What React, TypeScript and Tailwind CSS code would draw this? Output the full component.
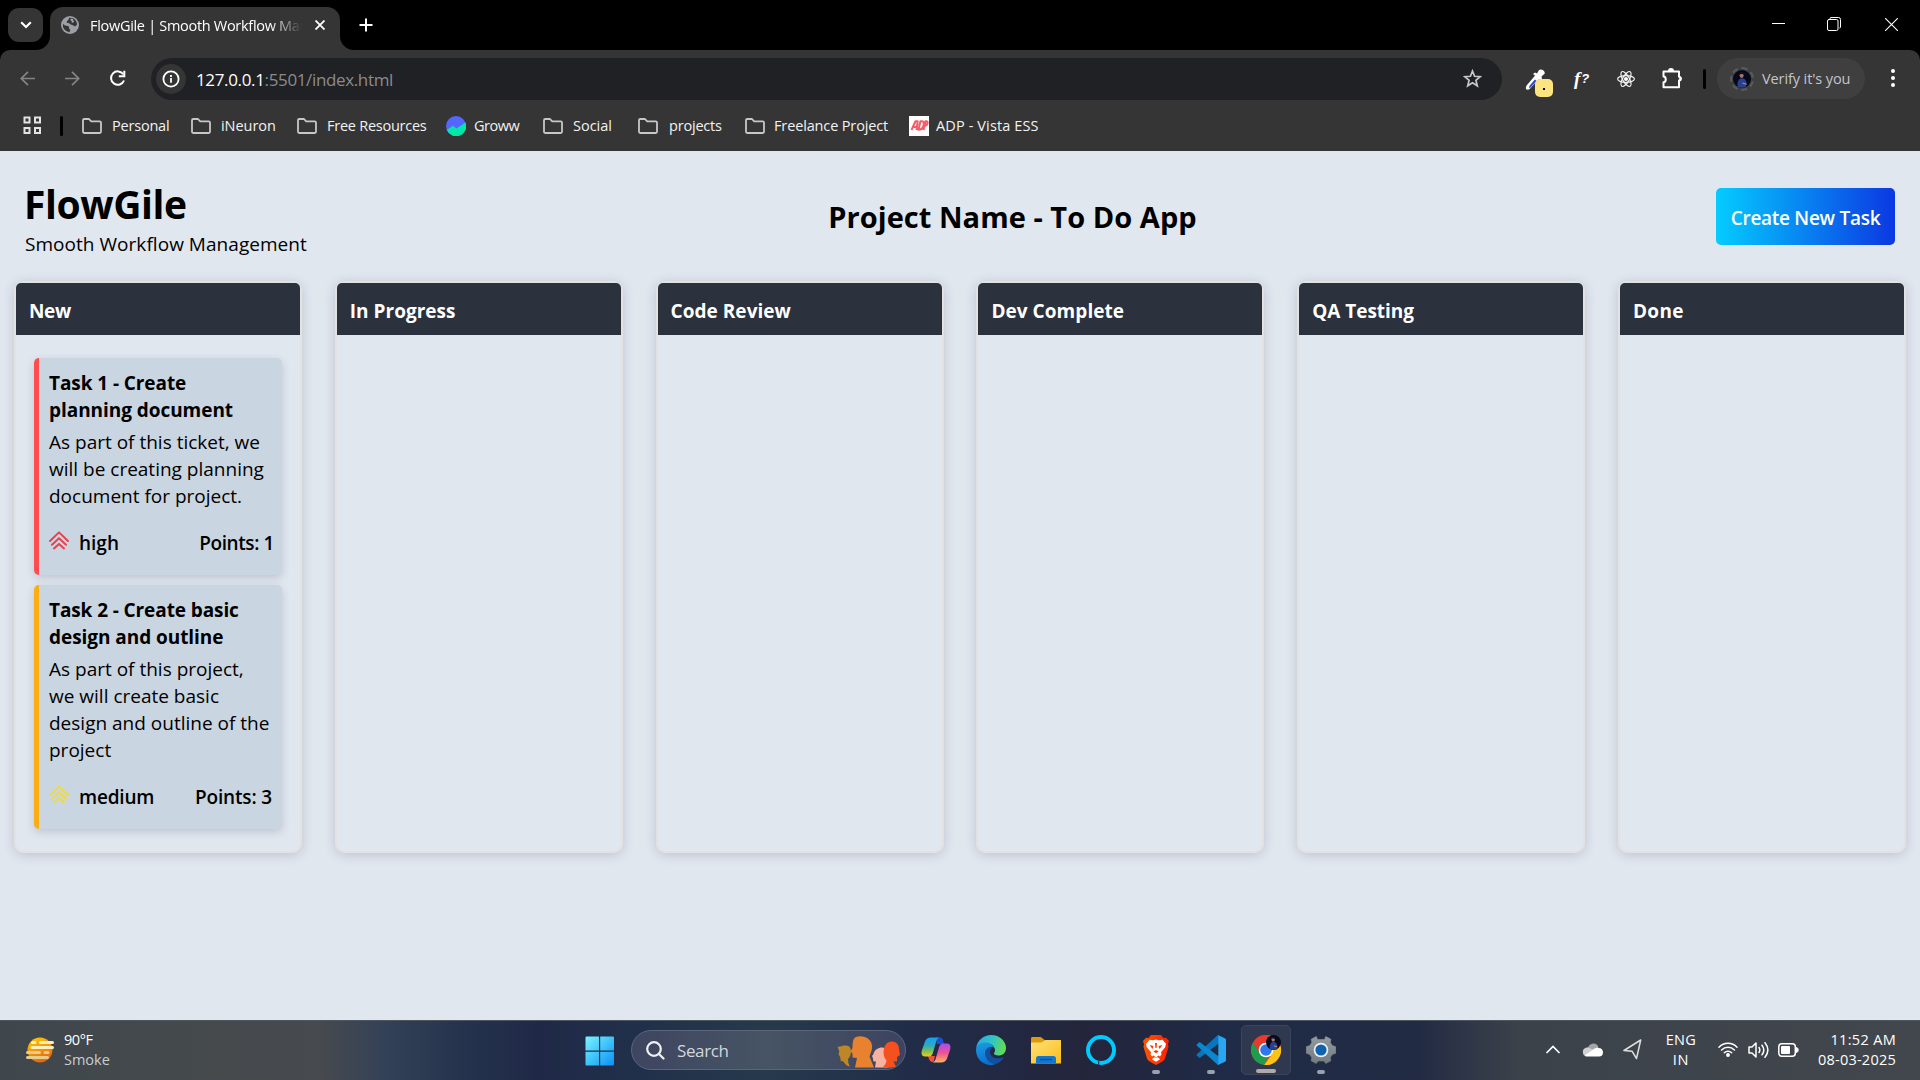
import React from 'react';

type Task = {
  title: React.ReactNode;
  body: React.ReactNode;
  level: 'high' | 'medium';
  points: number;
};

const tasks: Task[] = [
  {
    title: (
      <>
        <span className="tracking-[-0.08px]">Task 1 - Create</span>
        <br />
        planning document
      </>
    ),
    body: (
      <>
        As part of this ticket, we
        <br />
        will be creating planning
        <br />
        document for project.
      </>
    ),
    level: 'high',
    points: 1,
  },
  {
    title: (
      <>
        <span className="tracking-[-0.1px]">Task 2 - Create basic</span>
        <br />
        design and outline
      </>
    ),
    body: (
      <>
        As part of this project,
        <br />
        we will create basic
        <br />
        design and outline of the
        <br />
        project
      </>
    ),
    level: 'medium',
    points: 3,
  },
];

function Priority({ level }: { level: Task['level'] }) {
  return (
    <svg
      width="20"
      height="19"
      viewBox="0 0 20 19"
      fill="none"
      strokeWidth="2"
      strokeLinecap="round"
      strokeLinejoin="round"
      className={level === 'high' ? 'stroke-[#ea414c]' : 'stroke-[#ecdb45]'}
    >
      <path d="M1 10 10 1.400l9 8.600M3 13.800l7-6.500 7 6.500M5 17.400l5-4.500 5 4.500" />
    </svg>
  );
}

function TaskCard({ task }: { task: Task }) {
  const high = task.level === 'high';
  return (
    <article
      className={
        'rounded-[5px] border-l-[5px] bg-[#c9d5e1] px-[10px] pt-3 pb-[18px] text-[19px] leading-[27px] shadow-[0_3px_9px_rgba(60,55,90,0.2)] ' +
        (high ? 'border-[#ff4d4f]' : 'border-[#faad14]')
      }
    >
      <h3 className="font-bold tracking-[-0.05px] whitespace-nowrap">{task.title}</h3>
      <p className="mt-[5px] whitespace-nowrap">{task.body}</p>
      <div className="mt-5 flex justify-between font-semibold">
        <span className="flex gap-[10px]">
          <span className="pt-[1px]">
            <Priority level={task.level} />
          </span>
          <span className={high ? '' : 'tracking-[-0.2px]'}>{task.level}</span>
        </span>
        <span className={high ? 'mr-[-2px] tracking-[-0.4px]' : 'tracking-[-0.15px]'}>Points: {task.points}</span>
      </div>
    </article>
  );
}

const columns = [
  { name: 'New', cls: 'tracking-[-0.34px]' },
  { name: 'In Progress', cls: 'tracking-[0.02px]' },
  { name: 'Code Review', cls: 'tracking-[0.03px]' },
  { name: 'Dev Complete', cls: 'tracking-[0.05px]' },
  { name: 'QA Testing', cls: 'tracking-[-0.04px]' },
  { name: 'Done', cls: 'tracking-[0.3px]' },
];

function Board() {
  return (
    <main className="h-[869px] bg-[#e1e7ef] text-black">
      <header className="flex h-[130px] justify-between pr-[25px] pl-[24px]">
        <div className="w-[300px] pt-[29px] whitespace-nowrap">
          <h1 className="text-[39px] leading-[48px] font-bold tracking-[-0.4px]">FlowGile</h1>
          <p className="mt-[3px] pl-[1px] text-[19px] leading-[27px] tracking-[0.04px]">
            Smooth Workflow Management
          </p>
        </div>
        <h2 className="ml-[106px] pt-[46px] text-[29px] leading-[40px] font-bold tracking-[0.04px]">
          Project Name - To Do App
        </h2>
        <div className="flex w-[300px] justify-end pt-[37px]">
          <button className="h-[57px] w-[179px] rounded-[5px] bg-[linear-gradient(90deg,#05ccff,#0b38e2)] pt-[4px] text-[19px] font-semibold tracking-[-0.28px] text-white">
            Create New Task
          </button>
        </div>
      </header>
      <div className="flex h-[572px] justify-between px-[14px]">
        {columns.map((c, i) => (
          <section
            key={c.name}
            className="w-[288px] rounded-[10px] border-2 border-[#e2e2e3] shadow-[0_2px_12px_rgba(55,45,90,0.2)]"
          >
            <h2
              className={
                'h-[52px] rounded-t-[5px] bg-[#2b313d] pt-[15px] pl-[13px] text-[19px] leading-[27px] font-bold text-white ' +
                c.cls
              }
            >
              {c.name}
            </h2>
            {i === 0 && (
              <div className="flex flex-col gap-[10px] px-[18px] py-[23px]">
                {tasks.map((t) => (
                  <TaskCard key={t.level} task={t} />
                ))}
              </div>
            )}
          </section>
        ))}
      </div>
    </main>
  );
}

function TabStrip() {
  return (
    <div className="flex h-[50px] items-start bg-black text-white">
      <button className="mt-2 ml-2 flex h-[34px] w-[35px] items-center justify-center rounded-[11px] bg-[#353535]">
        <svg width="12" height="8" viewBox="0 0 12 8" fill="none" stroke="#fff" strokeWidth="2.2">
          <path d="M1.2 1.2 6 6l4.8-4.8" />
        </svg>
      </button>
      <svg width="14" height="14" className="mt-9 ml-[-7px]" fill="#353535">
        <path d="M14 0v14H0A14 14 0 0 0 14 0z" />
      </svg>
      <div className="mt-[7px] flex h-[43px] w-[290px] items-center rounded-t-[13px] bg-[#353535] pr-[14px] pb-[7px] pl-[11px]">
        <svg width="18" height="18" viewBox="0 0 18 18">
          <circle cx="9" cy="9" r="9" fill="#9aa0a6" />
          <path
            d="M2 7.500c1 2.200 3 2 5 2.600 2 .6.3 2.600 1.800 3.200.9.400 0 2.600-.4 3A7.300 7.300 0 0 1 2 7.500zM8.500 1.800c-1 1-.6 2.200-2 3-1.400.8-1 2.400.6 2.200 1.600-.2 1.800 1.600 3.500 1.700 1.800 0 2 2 3.600 1.500L16 8.800C16.300 5 13 1.400 8.500 1.800z"
            fill="#353535"
          />
          <path d="M10.500 2.500c2.500.5 1.500 2.500 3 3.200l-2.500 1.300c-1-.6.5-1.500-.8-2.200s-1.200-1.600.3-2.300z" fill="#9aa0a6" />
        </svg>
        <div className="ml-[10px] w-[213px] overflow-hidden mask-r-from-85% pt-[1px] pl-[1px] text-[14.500px] leading-5 tracking-[-0.3px] whitespace-nowrap">
          FlowGile | Smooth Workflow Management
        </div>
        <svg width="10" height="10" viewBox="0 0 10 10" stroke="#fff" strokeWidth="1.800" className="ml-[13px] shrink-0">
          <path d="m.5.5 9 9m0-9-9 9" />
        </svg>
      </div>
      <svg width="14" height="14" className="mt-9" fill="#353535">
        <path d="M0 0v14h14A14 14 0 0 1 0 0z" />
      </svg>
      <svg width="14" height="14" viewBox="0 0 14 14" stroke="#fff" strokeWidth="2" className="mt-[18px] ml-[5px]">
        <path d="M7 .5v13M.5 7h13" />
      </svg>
      <div className="mt-[17px] mr-[22px] ml-auto flex items-center gap-[43px]">
        <svg width="13" height="13" stroke="#fff" className="mr-[-1px]">
          <path d="M0 5.500h13" />
        </svg>
        <svg width="14" height="14" viewBox="0 0 14 14" fill="none" stroke="#fff" className="mr-[1px]">
          <path d="M3 2.500V1.700C3 1 3.300.5 4 .5h7.500a2 2 0 0 1 2 2V10c0 .6-.4 1-1 1" />
          <rect x=".5" y="2.500" width="10.500" height="11" rx="1.500" />
        </svg>
        <svg width="13" height="13" viewBox="0 0 13 13" stroke="#fff" strokeWidth="1.100">
          <path d="m0 0 13 13M13 0 0 13" />
        </svg>
      </div>
    </div>
  );
}

function Arrow({ flip }: { flip?: boolean }) {
  return (
    <svg
      width="15"
      height="15"
      viewBox="0 0 15 15"
      fill="none"
      stroke="#858585"
      strokeWidth="1.700"
      className={flip ? 'rotate-180' : ''}
    >
      <path d="M15 7.500H1.500M8 .8 1.300 7.500 8 14.200" />
    </svg>
  );
}

function Avatar({ size }: { size: number }) {
  return (
    <svg width={size} height={size} viewBox="0 0 18 18" className="shrink-0">
      <circle cx="9" cy="9" r="9" fill="#07091a" />
      <path d="M4.500 16.500C4 11 6 8.500 9 8.200c3 0 4.500 3 4.700 5.800l-1 3A9 9 0 0 1 4.500 16.500z" fill="#27408f" />
      <ellipse cx="8.600" cy="5.300" rx="2" ry="2.600" fill="#a5766b" />
      <path d="M6.500 4.600C6.500 1.800 10.800 1.800 10.700 4.800 9.500 3.900 8 3.900 6.500 4.600z" fill="#15121c" />
      <path d="m9.500 13 4 1.200" stroke="#c08d7f" strokeWidth="1.200" />
    </svg>
  );
}

function Toolbar() {
  return (
    <div className="flex h-[57px] items-center rounded-t-[10px] bg-[#353535] pl-5">
      <Arrow />
      <div className="ml-[30px] flex">
        <Arrow flip />
      </div>
      <svg width="17" height="17" viewBox="0 0 17 17" fill="none" stroke="#fff" strokeWidth="2" className="ml-[29px]">
        <path d="M14.300 4.300A6.700 6.700 0 1 0 15 10.500" />
        <path d="M15.300.8v5.400H9.800" />
      </svg>
      <div className="ml-[25px] flex h-[42px] w-[1351px] items-center rounded-full bg-[#202124] pr-5 pl-[5px]">
        <span className="flex size-[30px] items-center justify-center rounded-full bg-[#353535]">
          <svg width="18" height="18" viewBox="0 0 18 18" fill="none" stroke="#fff" strokeWidth="1.800">
            <circle cx="9" cy="9" r="7.600" />
            <path d="M9 8v4.800M9 5v1.900" />
          </svg>
        </span>
        <span className="ml-[10px] pt-0.5 text-[17px] leading-6 whitespace-nowrap text-[#8b8b8c]">
          <span className="tracking-[-0.35px] text-white">127.0.0.1</span>
          <span className="tracking-[-0.36px]">:5501/index.html</span>
        </span>
        <svg width="19" height="19" viewBox="0 0 19 19" fill="none" stroke="#c7c7c7" strokeWidth="1.700" className="ml-auto">
          <path d="m9.500 2 2.100 5.300 5.600.4-4.300 3.600 1.400 5.500-4.800-3-4.800 3 1.400-5.500-4.300-3.600 5.600-.4z" />
        </svg>
      </div>
      <div className="relative ml-[23px] size-5">
        <svg width="20" height="22" viewBox="0 0 20 22">
          <path d="m11 5.500-9 10.500c-1.500 2-1.700 4.500.6 4.700 1.500 0 2.200-.8 3.200-2L15 9z" fill="#fff" />
          <path d="m9.800 10.500-5 6c-1 1.600-.8 2.800.2 2.600L12 12z" fill="#2c4fd0" />
          <path d="m8 5 2-1.500 2 1 2-3.500c2-1.500 6 0 5.800 3.500l-3.300 3 .5 2-1.500 1.500z" fill="#fff" />
        </svg>
        <span className="absolute top-[10px] left-[10px] flex size-[18px] items-center justify-center rounded-[5px] bg-[#fde47f]">
          <span className="size-[2px] translate-y-[1px] bg-black" />
        </span>
      </div>
      <span className="ml-[29px] flex w-[18px] items-center leading-5 whitespace-nowrap text-white italic">
        <span className="font-['Liberation_Serif'] text-[19px] font-semibold">f</span>
        <span className="pl-[1px] font-['Liberation_Sans'] text-[13px] font-bold">?</span>
      </span>
      <svg width="18" height="18" viewBox="0 0 18 18" fill="none" stroke="#f1f1f1" strokeWidth="1.200" className="ml-[25px]">
        <ellipse cx="9" cy="9" rx="8.400" ry="3.300" />
        <ellipse cx="9" cy="9" rx="8.400" ry="3.300" transform="rotate(60 9 9)" />
        <ellipse cx="9" cy="9" rx="8.400" ry="3.300" transform="rotate(120 9 9)" />
        <circle cx="9" cy="9" r="1.500" fill="#fff" />
      </svg>
      <svg width="21" height="21" viewBox="0 0 21 21" fill="none" stroke="#fff" strokeWidth="2" className="mb-[1px] ml-[27px]">
        <path
          d="M1.500 3.500H17v5.300c2.200.2 2.200 3.500 0 3.700v6.700H1.500v-5c3-.3 3-5.300 0-5.600z"
          strokeLinejoin="round"
        />
        <path d="M7 3a2 2 0 0 1 4 0M17.500 9a1.800 1.800 0 0 1 0 3.500" fill="#fff" />
      </svg>
      <span className="ml-[20px] h-5 w-[3px] rounded bg-black" />
      <div className="ml-[11px] flex h-[41px] w-[148px] items-center rounded-full bg-[#3f3f3f] pl-[13px]">
        <span className="flex size-6 items-center justify-center rounded-full border-2 border-dashed border-[#5a5a5a]">
          <Avatar size={18} />
        </span>
        <span className="ml-[8px] text-[14.500px] tracking-[-0.1px] whitespace-nowrap text-[#c3c5c9]">Verify it's you</span>
      </div>
      <div className="mb-[1px] ml-[26px] flex flex-col gap-[3px]">
        <span className="size-1 rounded-full bg-white" />
        <span className="size-1 rounded-full bg-white" />
        <span className="size-1 rounded-full bg-white" />
      </div>
    </div>
  );
}

function Folder() {
  return (
    <svg width="20" height="16" viewBox="0 0 20 16" fill="none" stroke="#c7c7c7" strokeWidth="1.800" strokeLinejoin="round">
      <path d="M1 2.200C1 1.500 1.500 1 2.200 1H7l2.200 2.400h8.500c.8 0 1.300.5 1.300 1.200v9.200c0 .7-.5 1.200-1.200 1.200H2.200C1.500 15 1 14.500 1 13.800z" />
    </svg>
  );
}

function Groww() {
  return (
    <svg width="20" height="20" viewBox="0 0 20 20">
      <circle cx="10" cy="10" r="10" fill="#5367ff" />
      <path d="M.8 14 7 9.700l3.500 2.700L19.500 6.500A10 10 0 0 1 .8 14z" fill="#00e8a9" />
    </svg>
  );
}

function Adp() {
  return (
    <span className="flex size-5 items-center justify-center bg-white">
      <svg width="19" height="11" viewBox="0 0 18 11" fill="none" stroke="#f0606b" strokeWidth="2.100" strokeLinejoin="round">
        <path d="M1 10 5 1.200h2.200L6 10M3 7h3M8 9.700 10 1.200h1.500c2.200 0 2 3 1.200 5.400C12 9 11 9.700 8 9.700zM13 10l2-8.800h1.200c1.600.6 1 4.300-1.800 4.800" />
      </svg>
    </span>
  );
}

const bookmarks = [
  { label: 'Personal', icon: <Folder />, cls: 'w-[109px] gap-[10px] tracking-[-0.2px]' },
  { label: 'iNeuron', icon: <Folder />, cls: 'w-[106px] gap-[10px] tracking-[-0.04px]' },
  { label: 'Free Resources', icon: <Folder />, cls: 'w-[149px] gap-[10px] tracking-[-0.25px]' },
  { label: 'Groww', icon: <Groww />, cls: 'w-[97px] gap-[8px] tracking-[-0.48px]' },
  { label: 'Social', icon: <Folder />, cls: 'w-[95px] gap-[10px]' },
  { label: 'projects', icon: <Folder />, cls: 'w-[107px] gap-[11px] tracking-[-0.2px]' },
  { label: 'Freelance Project', icon: <Folder />, cls: 'w-[164px] gap-[9px] tracking-[-0.14px]' },
  { label: 'ADP - Vista ESS', icon: <Adp />, cls: 'gap-[7px] tracking-[0.12px]' },
];

function Bookmarks() {
  return (
    <div className="flex h-11 items-center bg-[#353535] pb-[7px] pl-[23px] text-[14.500px] leading-5 text-[#f2f2f2]">
      <svg width="19" height="19" viewBox="0 0 19 19" fill="none" stroke="#e3e3e3" strokeWidth="2">
        <path d="M1.500 1.500h5v5h-5zM12 1.500h5v5h-5zM1.500 12h5v5h-5zM12 12h5v5h-5z" />
      </svg>
      <span className="ml-[18px] h-5 w-[3px] rounded bg-black" />
      <div className="ml-[19px] flex">
        {bookmarks.map((b) => (
          <span key={b.label} className={'flex shrink-0 items-center whitespace-nowrap ' + b.cls}>
            {b.icon}
            {b.label}
          </span>
        ))}
      </div>
    </div>
  );
}

function WindowsLogo() {
  return (
    <svg width="30" height="30" viewBox="0 0 30 30">
      <defs>
        <linearGradient id="win" x1="0" y1="0" x2="1" y2="1">
          <stop offset="0" stopColor="#7df3ff" />
          <stop offset=".5" stopColor="#3fc4fb" />
          <stop offset="1" stopColor="#0c8ff6" />
        </linearGradient>
      </defs>
      <path
        d="M1.800.500H14v14H.5V1.800C.5 1 1 .5 1.800.5zM15.200.500h12.500c.9 0 1.300.5 1.300 1.300v12.700H15.200zM.5 15.700H14v13.800H1.800c-.8 0-1.300-.5-1.300-1.300zM15.200 15.700H29v12.500c0 .8-.4 1.300-1.300 1.300H15.200z"
        fill="url(#win)"
      />
    </svg>
  );
}

function People() {
  return (
    <svg width="64" height="32" viewBox="0 0 64 32">
      <path
        d="M.5 10.500C3 11.500 5 9 8 9.500c3 0 6 .5 6 6 0 4-2 6.500-3 7.500l.5 4.500 1.500 3c-3-.5-5-2-6.500-5l-2.700-.500-.5-3.500L1.500 18l.8-2.500z"
        fill="#bd8728"
      />
      <path
        d="M18 1.500C25-2 36 2 35 12c-.3 4-2 6-2.500 8.500L37 31.500H18l2-9.500-4.500-.5v-4l-2-2 2-3.500c-.2-5 .5-8.500 2.500-10.500z"
        fill="#e8822e"
      />
      <path d="M40 13c3-2.500 9-2 11 1v17.500H38l1-6h-2.500l-.8-4-.7-1.500 1.500-2c.3-2 1.500-4 3.500-5z" fill="#f6b3a3" />
      <path d="M50 7c5-3.500 12-1 12 6l1 6-3 2v4.500h-3.500l2.500 5c-4 1.500-10 1.500-13 0 2-1 3-3 3.500-6-4-4-4-13 .5-17.500z" fill="#f4511e" />
    </svg>
  );
}

function Copilot() {
  return (
    <svg width="30" height="26" viewBox="0 0 30 26">
      <defs>
        <linearGradient id="cpA" x1="0" y1="0" x2="0" y2="1">
          <stop offset="0" stopColor="#14a4e9" />
          <stop offset=".4" stopColor="#2aa8c8" />
          <stop offset=".7" stopColor="#78bf5a" />
          <stop offset="1" stopColor="#f5cd10" />
        </linearGradient>
        <linearGradient id="cpB" x1="0" y1="0" x2="0" y2="1">
          <stop offset="0" stopColor="#a64cf0" />
          <stop offset=".5" stopColor="#ef5393" />
          <stop offset="1" stopColor="#ffb25e" />
        </linearGradient>
      </defs>
      <path d="M15 .5h4c2 0 2.700 1.500 3.200 3.200L23 7h-7z" fill="#1b4fd8" />
      <path d="M7 19h7l-1.500 6h-1.200C9 25 8 22.500 7 19z" fill="#f0503c" />
      <path d="M10 .5h8c-2 1-2.500 3-3.200 5.500L12 15.500C11 19 9.500 19.500 7 19.500H4C.5 19.500 0 16.500 1 13L4 4.500C5 2 7 .5 10 .5z" fill="url(#cpA)" />
      <path d="M20 25.500h-8c2-1 2.500-3 3.200-5.500L18 10.500C19 7 20.500 6.500 23 6.500h3c3.500 0 4 3 3 6.500l-3 8.500c-1 2.500-3 4-6 4z" fill="url(#cpB)" />
    </svg>
  );
}

function Edge() {
  return (
    <svg width="30" height="30" viewBox="0 0 30 30">
      <defs>
        <linearGradient id="edA" x1="0" y1=".3" x2="1" y2=".5">
          <stop offset="0" stopColor="#2fa9e0" />
          <stop offset=".5" stopColor="#2fc3c8" />
          <stop offset="1" stopColor="#66dd4e" />
        </linearGradient>
        <linearGradient id="edB" x1="0" y1="0" x2=".3" y2="1">
          <stop offset="0" stopColor="#1b9de2" />
          <stop offset="1" stopColor="#0b6fd0" />
        </linearGradient>
      </defs>
      <path d="M0 14C1 5 8 0 15 0c9 0 15 6.500 15 13 0 5-3.500 7.500-7.500 7.500-3 0-5-1-4.500-2.500 3-3-.5-10-8.500-10C5 8 1.500 10 0 14z" fill="url(#edA)" />
      <path d="M0 14.500C.5 10 5 7.500 9.500 7.500c4 0 7.500 2.500 8 5-6-2-8.500 4-6.500 8.500 2 5 6.500 7.500 9 7.800-1.500.8-3.500 1.200-5 1.200C6.500 30 0 23.500 0 15z" fill="url(#edB)" />
      <path d="M12.500 12.800c-4 1.700-4.200 6.500-2 10.500 2 4 5.500 6 9.500 5.600 3.500-1.200 6.500-3.800 8-7.200-4 2.300-9.500 2.300-12.500-1-2.300-2.500-1.800-5.500.5-8z" fill="#12509f" />
    </svg>
  );
}

function Explorer() {
  return (
    <svg width="30" height="27" viewBox="0 0 30 27">
      <defs>
        <linearGradient id="fx" x1="0" y1="0" x2="1" y2="1">
          <stop offset="0" stopColor="#ffe17a" />
          <stop offset="1" stopColor="#fbbd19" />
        </linearGradient>
      </defs>
      <path d="M0 1.500C0 .6.600 0 1.500 0H9c1.500 0 2 1 3 1.800L14 3.200h16V9H0z" fill="#dd9b0c" />
      <path d="M0 5.500h10c2 0 3-2.500 5-2.500h14c.6 0 1 .4 1 1v22.500H0z" fill="url(#fx)" />
      <path d="M5 26.500v-5C5 20 6 19 7.500 19h15c1.500 0 2.500 1 2.500 2.500v5z" fill="#1377cf" />
      <path d="M9.500 22.500h11" stroke="#0b4f95" strokeWidth="1.300" strokeLinecap="round" />
    </svg>
  );
}

function Alexa() {
  return (
    <svg width="30" height="30" viewBox="0 0 30 30" fill="none">
      <circle cx="15" cy="15" r="13" stroke="#00caff" strokeWidth="4" />
      <path d="M12.700 26v3.900" stroke="#22253a" strokeWidth="1" />
    </svg>
  );
}

function Brave() {
  return (
    <svg width="26" height="30" viewBox="0 0 26 30">
      <defs>
        <linearGradient id="br" x1="0" x2="1">
          <stop offset="0" stopColor="#ff5500" />
          <stop offset="1" stopColor="#ff2000" />
        </linearGradient>
      </defs>
      <path d="M8 0h10l2.500 3 2.500-.3L26 6l-1 3 .5 3-3.500 11.500c-.5 1.500-2 2.500-3.500 3.500L13 30l-5.500-3C6 26 4.500 25 4 23.500L.5 12 1 9 0 6l3-3.300 2.500.3z" fill="url(#br)" />
      <path
        d="m6.500 4.800 3.500.5 3-.7 3 .7 3.500-.5 3.500 4-.8 3.500-4.200 5 .5 2-1.500 2.200-1.800-1L13 23l-2.200-2.500-1.800 1L7.500 19.300l.5-2-4.200-5L3 8.800z"
        fill="#fff"
      />
      <path d="m6.500 10 4 1-1 3zM19.500 10l-4 1 1 3zM10.300 16.500 13 15l2.700 1.500L13 18.300zM12 8h2l-.4 5h-1.200z" fill="#ff3a00" />
      <path d="m8.800 24.200 2.400-2 1.800.8 1.800-.8 2.400 2L13 26.800z" fill="#fff" />
    </svg>
  );
}

function VsCode() {
  return (
    <svg width="30" height="30" viewBox="0 0 30 30">
      <path d="M22.200.2 29 3.200c.6.300 1 .9 1 1.600L22 9 4.300 22.600c-.4.300-.9.300-1.300 0L.9 20.700a1 1 0 0 1 0-1.400L21 .8z" fill="#0876bd" />
      <path d="M22.200 29.800 29 26.800c.6-.3 1-.9 1-1.600L22 21 4.300 7.400c-.4-.3-.9-.3-1.300 0L.9 9.300a1 1 0 0 0 0 1.400L21 29.200z" fill="#0a87cf" />
      <path d="M22.200 29.800c-.6.200-1.200 0-1.500-.4.800.7 1.600.3 1.600-.8V1.400c0-1.100-.8-1.500-1.600-.8.300-.4.900-.6 1.500-.4L29 3.400c.6.300 1 .9 1 1.600v20c0 .7-.4 1.300-1 1.600z" fill="#2aa5ef" />
    </svg>
  );
}

function Chrome() {
  return (
    <div className="relative">
      <svg width="30" height="30" viewBox="0 0 30 30">
        <circle cx="15" cy="15" r="15" fill="#e33b2e" />
        <path d="M2 7.500 8.900 18.500 17 22l-3.800 7.900A15 15 0 0 1 2 7.500z" fill="#1f9d4d" />
        <path d="M15 8h13.300A15 15 0 0 1 13.200 29.900L21 19z" fill="#fbc312" />
        <path d="M2 7.500A15 15 0 0 1 28 7.500L28.300 8H15l-6 8z" fill="#e33b2e" />
        <circle cx="15" cy="15" r="7.300" fill="#fff" />
        <circle cx="15" cy="15" r="5.800" fill="#2f78ec" />
      </svg>
      <div className="absolute top-0 left-[15px] flex">
        <Avatar size={15} />
      </div>
    </div>
  );
}

function Settings() {
  return (
    <svg width="30" height="28" viewBox="0 0 30 28">
      <defs>
        <linearGradient id="st" x1="0" y1="0" x2="0" y2="1">
          <stop offset="0" stopColor="#939aa0" />
          <stop offset="1" stopColor="#737a80" />
        </linearGradient>
      </defs>
      <path
        d="m11.500 3.500-1.200-3L5.200 3.200l.6 3.300-2 3L.2 10.800v6.400l3.500 1.300 2 3-.6 3.300 5.100 2.800 2-2.600h5.600l2 2.600 5.100-2.800-.6-3.300 2-3 3.500-1.300v-6.400l-3.500-1.300-2-3 .6-3.300L19.700.5l-1.200 3z"
        fill="url(#st)"
        stroke="url(#st)"
        strokeWidth=".6"
        strokeLinejoin="round"
      />
      <circle cx="15" cy="14" r="7.300" fill="#eef1f4" />
      <circle cx="15" cy="14" r="5.600" fill="#0f62b0" />
    </svg>
  );
}

const apps = [
  { id: 'copilot', icon: <Copilot />, mark: '' },
  { id: 'edge', icon: <Edge />, mark: '' },
  { id: 'explorer', icon: <Explorer />, mark: '' },
  { id: 'alexa', icon: <Alexa />, mark: '' },
  { id: 'brave', icon: <Brave />, mark: 'w-2 bg-[#9b9fae]' },
  { id: 'code', icon: <VsCode />, mark: 'w-2 bg-[#9b9fae]' },
  { id: 'chrome', icon: <Chrome />, mark: 'w-5 bg-[#b0aba6]' },
  { id: 'settings', icon: <Settings />, mark: 'w-2 bg-[#9b9fae]' },
];

function Weather() {
  return (
    <svg width="28" height="26" viewBox="0 0 28 26">
      <defs>
        <linearGradient id="sun" x1="0" y1="0" x2=".4" y2="1">
          <stop offset="0" stopColor="#ffcf0a" />
          <stop offset="1" stopColor="#e8680c" />
        </linearGradient>
      </defs>
      <circle cx="14" cy="13" r="12.500" fill="url(#sun)" />
      <g strokeWidth="3" strokeLinecap="round">
        <path d="M6.500 5.500H9M14.500 5.500h12M6 10.500h20.500" stroke="#fbeebb" />
        <path d="M1.500 15.500h12M19 15.500h3M1.500 20.500h20" stroke="#e6cd8c" />
      </g>
    </svg>
  );
}

function Taskbar() {
  return (
    <footer className="flex h-[60px] items-center bg-[linear-gradient(90deg,#3f474c_0,#44494c_170px,#474a4e_320px,#334157_385px,#25334d_460px,#1f2947_540px,#21304a_640px,#263a4c_770px,#212c48_920px,#23253b_1085px,#1f2b47_1230px,#232b44_1420px,#3c424a_1520px,#42474d_1920px)] text-[14.500px] leading-5 text-white inset-shadow-[0_1px_0_#4d565f]">
      <div className="flex w-[575px] items-center pb-[1px] pl-[26px]">
        <Weather />
        <div className="ml-[10px]">
          <div className="tracking-[-0.43px]">90°F</div>
          <div className="text-[#c9ccd0]">Smoke</div>
        </div>
      </div>
      <div className="flex w-[50px] justify-center pt-[1px]">
        <WindowsLogo />
      </div>
      <div className="ml-[6px] flex h-10 w-[275px] items-center rounded-full border border-[#5b667a] bg-[linear-gradient(90deg,#3e4560,#465464_50%,#3d4360)] pr-[4px] pl-[14px]">
        <svg width="19" height="19" viewBox="0 0 19 19" fill="none" stroke="#f0f1f3" strokeWidth="2.200" strokeLinecap="round">
          <circle cx="8" cy="8" r="6.800" />
          <path d="m13 13 4.500 4.500" />
        </svg>
        <span className="ml-[12px] pt-[1px] text-[17px] tracking-[-0.38px] text-[#d3d7dd]">Search</span>
        <span className="ml-auto pt-[3px]">
          <People />
        </span>
      </div>
      <div className="ml-[5px] flex gap-[5px]">
        {apps.map((a) => (
          <div
            key={a.id}
            className={
              'relative flex h-[50px] w-[50px] items-center justify-center rounded-[5px] ' +
              (a.id === 'chrome' ? 'border border-[#3c4459] bg-[#30384f]' : '')
            }
          >
            {a.icon}
            {a.mark && <span className={'absolute bottom-[1px] h-1 rounded-full ' + a.mark} />}
          </div>
        ))}
      </div>
      <div className="mr-[24px] ml-auto flex items-center pb-[1px]">
        <svg width="14" height="9" viewBox="0 0 14 9" fill="none" stroke="#fff" strokeWidth="1.700" strokeLinecap="round">
          <path d="m1 7.500 6-6 6 6" />
        </svg>
        <svg width="21" height="14" viewBox="0 0 21 14" className="ml-[22px]">
          <path d="M5 9c0-5 3-8.500 6.500-8.500 3 0 4.500 2 5 4L10 9z" fill="#a3a6a9" />
          <path d="M1 10C0 6 4 3.500 7 4.800L15 9l-8 4H4C2 13 1 11.500 1 10z" fill="#cfd1d3" />
          <path d="M3 12.500c0-1 6-4 8-6 2-1.500 4-2 5.500-1.500 3 0 4.500 2 4.500 4.500s-1.500 4-4 4H5C3.500 13.500 3 13 3 12.500z" fill="#fff" />
        </svg>
        <svg width="19" height="21" viewBox="0 0 19 21" fill="none" stroke="#dedede" strokeWidth="1.500" strokeLinejoin="round" className="ml-[20px]">
          <path d="M17.700 1 1 11.500l8 .7 4.500 7.300z" />
        </svg>
        <div className="ml-[19px] w-10 text-center">
          <div className="tracking-[0.26px]">ENG</div>
          <div className="tracking-[0.600px]">IN</div>
        </div>
        <svg width="20" height="15" viewBox="0 0 20 15" fill="none" stroke="#fff" strokeWidth="1.500" strokeLinecap="round" className="ml-[17px]">
          <path d="M1 5.200a12.500 12.500 0 0 1 18 0M3.600 8a9 9 0 0 1 12.800 0M6.300 10.700a5.200 5.200 0 0 1 7.400 0" />
          <circle cx="10" cy="13" r="1.200" fill="#fff" />
        </svg>
        <svg width="21" height="18" viewBox="0 0 21 18" fill="none" stroke="#fff" strokeWidth="1.500" strokeLinecap="round" strokeLinejoin="round" className="ml-[10px]">
          <path d="M1 6v6h3l4 4V2L4 6zM11 6.500c1 1.500 1 3.500 0 5M14 4.200c2.300 3 2.300 6.600 0 9.600M17 1.700c3.600 4.500 3.600 10 0 14.600" />
        </svg>
        <svg width="21" height="14" viewBox="0 0 21 14" className="ml-[9px]">
          <rect x=".8" y=".8" width="16.500" height="12.400" rx="3" fill="none" stroke="#fff" strokeWidth="1.500" />
          <rect x="3" y="3" width="9" height="8" rx="1" fill="#fff" />
          <path d="M18.500 4.500c2.200.3 2.200 4.700 0 5z" fill="#fff" stroke="#fff" />
        </svg>
        <div className="ml-[19px] text-right">
          <div className="tracking-[0.32px]">11:52 AM</div>
          <div className="tracking-[0.24px]">08-03-2025</div>
        </div>
      </div>
    </footer>
  );
}

export default function App() {
  return (
    <div className="flex h-[1080px] w-[1920px] flex-col overflow-hidden bg-black font-['Open_Sans','Noto_Sans',sans-serif]">
      <TabStrip />
      <Toolbar />
      <Bookmarks />
      <Board />
      <Taskbar />
    </div>
  );
}
